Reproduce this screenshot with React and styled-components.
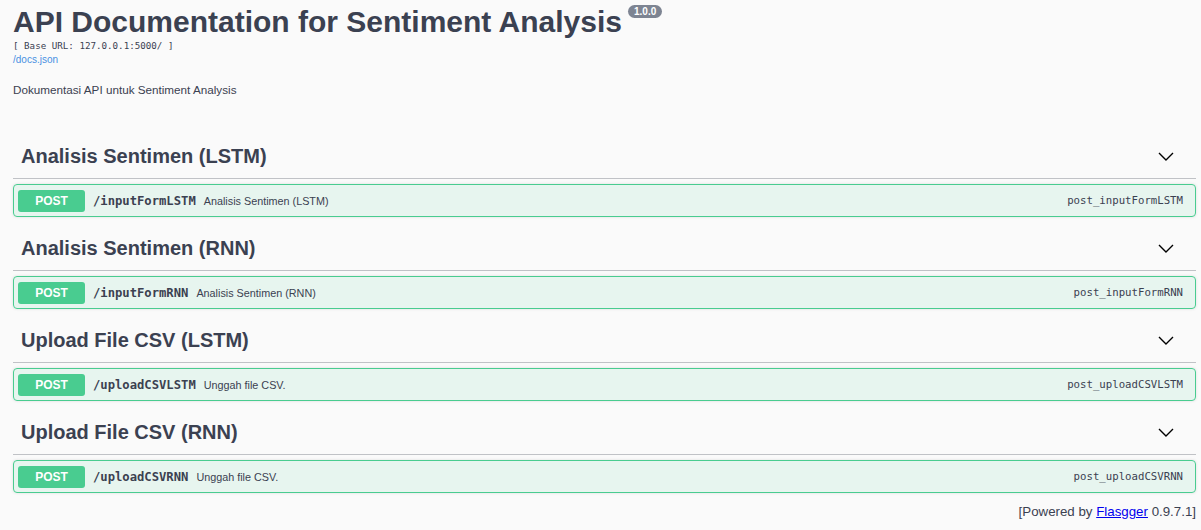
import React from 'react';
import styled, { createGlobalStyle } from 'styled-components';

const
  GlobalStyle = createGlobalStyle`
    html, body {
      margin: 0;
      padding: 0;
      background: #fafafa;
    }
    body {
      font-family: "Liberation Sans", Arial, sans-serif;
      color: #3b4151;
    }
  `,
  Wrapper = styled.div`
    padding: 4px 5px 0 13px;
  `,
  Info = styled.div`
    display: flex;
    flex-direction: column;
    align-items: flex-start;
  `,
  Title = styled.h2`
    margin: 0;
    font-size: 30px;
    line-height: 36px;
    font-weight: 700;
    color: #3b4151;
    display: flex;
    align-items: flex-start;
  `,
  Version = styled.span`
    margin: 1px 0 0 6px;
    padding: 0 6px;
    height: 13px;
    line-height: 13px;
    border-radius: 57px;
    background: #7d8492;
    color: #fff;
    font-size: 10px;
    font-weight: 700;
  `,
  BaseUrl = styled.pre`
    margin: 0;
    font-family: "DejaVu Sans Mono", monospace;
    font-size: 9.2px;
    line-height: 12px;
    color: #3b4151;
  `,
  SpecLink = styled.a`
    margin-top: 2px;
    font-size: 10px;
    line-height: 12px;
    color: #4990e2;
    text-decoration: none;
  `,
  Description = styled.p`
    margin: 17px 0 0;
    font-size: 11.7px;
    line-height: 14px;
  `,
  Sections = styled.div`
    margin-top: 38px;
    display: flex;
    flex-direction: column;
    gap: 10px;
  `,
  Section = styled.div`
    display: flex;
    flex-direction: column;
    gap: 5px;
  `,
  TagHeader = styled.div`
    display: flex;
    align-items: center;
    height: 43px;
    padding: 0 22px 0 8px;
    border-bottom: 1px solid rgba(59, 65, 81, .3);
    & > h3 {
      margin: 0;
      flex: 1;
      font-size: 20px;
      font-weight: 700;
      color: #3b4151;
    }
  `,
  Block = styled.div`
    display: flex;
    align-items: center;
    height: 31px;
    padding: 0 12px 0 4px;
    border: 1px solid #49cc90;
    border-radius: 4px;
    background: rgba(73, 204, 144, .1);
    box-shadow: 0 0 3px rgba(0, 0, 0, .12);
  `,
  Method = styled.span`
    width: 67px;
    height: 22px;
    line-height: 22px;
    text-align: center;
    border-radius: 3px;
    background: #49cc90;
    color: #fff;
    font-size: 12px;
    font-weight: 700;
  `,
  Path = styled.span`
    margin-left: 8px;
    font-family: "DejaVu Sans Mono", monospace;
    font-size: 12.2px;
    font-weight: 700;
    color: #3b4151;
  `,
  Summary = styled.span`
    margin-left: 8px;
    flex: 1;
    font-size: 10.8px;
    color: #3b4151;
  `,
  OperationId = styled.span`
    font-family: "DejaVu Sans Mono", monospace;
    font-size: 10.7px;
    color: #3b4151;
  `,
  Footer = styled.div`
    margin-top: 11px;
    text-align: right;
    font-size: 13.3px;
    line-height: 16px;
    color: #3b4151;
    & > a {
      color: #0000ee;
    }
  `;

const sections = [
  { tag: 'Analisis Sentimen (LSTM)', path: '/inputFormLSTM', summary: 'Analisis Sentimen (LSTM)', id: 'post_inputFormLSTM' },
  { tag: 'Analisis Sentimen (RNN)', path: '/inputFormRNN', summary: 'Analisis Sentimen (RNN)', id: 'post_inputFormRNN' },
  { tag: 'Upload File CSV (LSTM)', path: '/uploadCSVLSTM', summary: 'Unggah file CSV.', id: 'post_uploadCSVLSTM' },
  { tag: 'Upload File CSV (RNN)', path: '/uploadCSVRNN', summary: 'Unggah file CSV.', id: 'post_uploadCSVRNN' }
];

const Chevron = () =>
  <svg width="16" height="9" viewBox="0 0 16 9">
    <polyline points="1,1 8,8 15,1" fill="none" stroke="#000" strokeWidth="1.4" />
  </svg>;

export default function App() {
  return <React.Fragment>
    <GlobalStyle />
    <Wrapper>
      <Info>
        <Title>API Documentation for Sentiment Analysis<Version>1.0.0</Version></Title>
        <BaseUrl>[ Base URL: 127.0.0.1:5000/ ]</BaseUrl>
        <SpecLink href="#">/docs.json</SpecLink>
        <Description>Dokumentasi API untuk Sentiment Analysis</Description>
      </Info>
      <Sections>
        {sections.map(s => <Section key={s.path}>
          <TagHeader>
            <h3>{s.tag}</h3>
            <Chevron />
          </TagHeader>
          <Block>
            <Method>POST</Method>
            <Path>{s.path}</Path>
            <Summary>{s.summary}</Summary>
            <OperationId>{s.id}</OperationId>
          </Block>
        </Section>)}
      </Sections>
      <Footer>[Powered by <a href="#">Flasgger</a> 0.9.7.1]</Footer>
    </Wrapper>
  </React.Fragment>;
}
